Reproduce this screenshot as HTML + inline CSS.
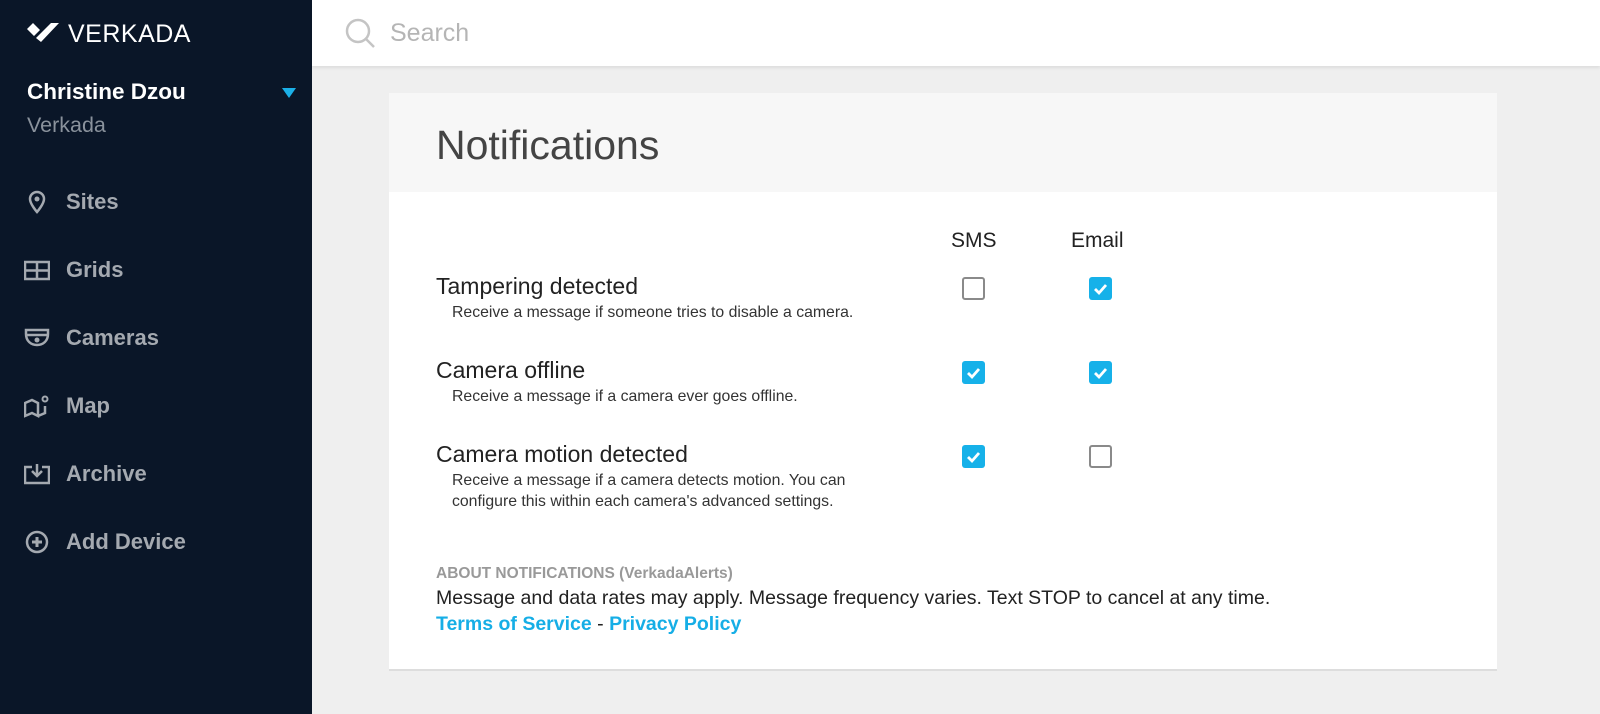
<!DOCTYPE html>
<html><head><style>
*{margin:0;padding:0;box-sizing:border-box}
body{width:1600px;height:714px;background:#efefef;font-family:"Liberation Sans",sans-serif;position:relative;overflow:hidden}
.sb{position:absolute;left:0;top:0;width:312px;height:714px;background:#0a1628}
.logo{position:absolute;left:26px;top:20px;color:#fff;font-size:25px;letter-spacing:0.5px}
.name{position:absolute;left:27px;top:79px;color:#fff;font-weight:bold;font-size:22.5px}
.org{position:absolute;left:27px;top:113px;color:#8a929c;font-size:21.5px}
.tri{position:absolute;left:282px;top:88px;width:0;height:0;border-left:7px solid transparent;border-right:7px solid transparent;border-top:10px solid #1bb0e8}
.nav{position:absolute;left:24px;color:#a4a9b0;font-size:22px;font-weight:bold;display:flex;align-items:center}
.nav svg{width:26px;height:26px;margin-right:16px}
.top{position:absolute;left:312px;top:0;right:0;height:66px;background:#fff;box-shadow:0 2px 3px rgba(0,0,0,.08)}
.search{position:absolute;left:78px;top:19px;font-size:25px;color:#b5b5b5}
.card{position:absolute;left:389px;top:93px;width:1108px;height:578px;background:#fff;border-bottom:2px solid #ddd}
.hd{height:99px;background:#f7f7f7;padding:29px 47px;font-size:41px;color:#444}
.t{position:absolute;left:47px;font-size:23px;color:#222}
.d{position:absolute;left:63px;font-size:15.8px;color:#333;line-height:21px}
.cb{position:absolute;width:23px;height:23px;border-radius:3px}
.off{border:2px solid #8a8a8a;background:#fff}
.on{background:#16b1e9}
.col{position:absolute;font-size:21px;color:#222;top:136px}
a{color:#16aee6;text-decoration:none;font-weight:bold}
</style></head><body>
<div class="sb">
<div class="logo"><svg width="36" height="24" viewBox="0 0 36 24" style="vertical-align:-3px;margin-right:6px"><path d="M1 8 L7 2 L14 9 L8 15 Z M10 17 L25 2 L33 2 L15 21 Z" fill="#fff"/></svg>VERKADA</div>
<div class="name">Christine Dzou</div>
<div class="org">Verkada</div>
<div class="tri"></div>
<div class="nav" style="top:189px"><svg viewBox="0 0 26 26"><path d="M13 3a7 7 0 0 0-7 7c0 5 7 13 7 13s7-8 7-13a7 7 0 0 0-7-7z" fill="none" stroke="#a4a9b0" stroke-width="2.5"/><circle cx="13" cy="10" r="2.5" fill="#a4a9b0"/></svg>Sites</div>
<div class="nav" style="top:257px"><svg viewBox="0 0 26 26"><rect x="1" y="5" width="24" height="17" fill="none" stroke="#a4a9b0" stroke-width="2.5"/><path d="M1 13.5h24M13 5v17" stroke="#a4a9b0" stroke-width="2.5"/></svg>Grids</div>
<div class="nav" style="top:325px"><svg viewBox="0 0 26 26"><path d="M2 5h22v4c0 7-5 11-11 11S2 16 2 9z" fill="none" stroke="#a4a9b0" stroke-width="2.5"/><path d="M3 10h20" stroke="#a4a9b0" stroke-width="2.5"/><circle cx="13" cy="15" r="2.5" fill="#a4a9b0"/></svg>Cameras</div>
<div class="nav" style="top:393px"><svg viewBox="0 0 26 26"><path d="M1 10l7-3 6 3v13l-6-3-7 3z M14 23l7-3v-7" fill="none" stroke="#a4a9b0" stroke-width="2.5"/><circle cx="21" cy="6" r="2.5" fill="none" stroke="#a4a9b0" stroke-width="2"/></svg>Map</div>
<div class="nav" style="top:461px"><svg viewBox="0 0 26 26"><path d="M8 6H1v16h24V6h-7" fill="none" stroke="#a4a9b0" stroke-width="2.5"/><path d="M13 3v11M8 10l5 5 5-5" fill="none" stroke="#a4a9b0" stroke-width="2.5"/></svg>Archive</div>
<div class="nav" style="top:529px"><svg viewBox="0 0 26 26"><circle cx="13" cy="13" r="10" fill="none" stroke="#a4a9b0" stroke-width="2.5"/><path d="M13 8v10M8 13h10" stroke="#a4a9b0" stroke-width="3"/></svg>Add Device</div>
</div>
<div class="top"><svg style="position:absolute;left:33px;top:18px" width="32" height="32" viewBox="0 0 32 32"><circle cx="13" cy="13" r="11" fill="none" stroke="#c4c4c4" stroke-width="2.5"/><path d="M21 21l8 8" stroke="#c4c4c4" stroke-width="2.5"/></svg><div class="search">Search</div></div>
<div class="card">
<div class="hd">Notifications</div>
<div class="col" style="left:562px">SMS</div>
<div class="col" style="left:682px">Email</div>
<div class="t" style="top:180px">Tampering detected</div>
<div class="d" style="top:209px">Receive a message if someone tries to disable a camera.</div>
<div class="t" style="top:264px">Camera offline</div>
<div class="d" style="top:293px">Receive a message if a camera ever goes offline.</div>
<div class="t" style="top:348px">Camera motion detected</div>
<div class="d" style="top:377px">Receive a message if a camera detects motion. You can<br>configure this within each camera's advanced settings.</div>
<div class="cb off" style="left:573px;top:184px"></div>
<div class="cb on" style="left:700px;top:184px"><svg width="23" height="23"><path d="M6 12l4 4 7-8" fill="none" stroke="#fff" stroke-width="2.8"/></svg></div>
<div class="cb on" style="left:573px;top:268px"><svg width="23" height="23"><path d="M6 12l4 4 7-8" fill="none" stroke="#fff" stroke-width="2.8"/></svg></div>
<div class="cb on" style="left:700px;top:268px"><svg width="23" height="23"><path d="M6 12l4 4 7-8" fill="none" stroke="#fff" stroke-width="2.8"/></svg></div>
<div class="cb on" style="left:573px;top:352px"><svg width="23" height="23"><path d="M6 12l4 4 7-8" fill="none" stroke="#fff" stroke-width="2.8"/></svg></div>
<div class="cb off" style="left:700px;top:352px"></div>
<div style="position:absolute;left:47px;top:472px;font-size:15.5px;font-weight:bold;color:#999">ABOUT NOTIFICATIONS (VerkadaAlerts)</div>
<div style="position:absolute;left:47px;top:494px;font-size:19.5px;color:#222">Message and data rates may apply. Message frequency varies. Text STOP to cancel at any time.</div>
<div style="position:absolute;left:47px;top:520px;font-size:19.5px;color:#222"><a>Terms of Service</a> - <a>Privacy Policy</a></div>
</div>
</body></html>
